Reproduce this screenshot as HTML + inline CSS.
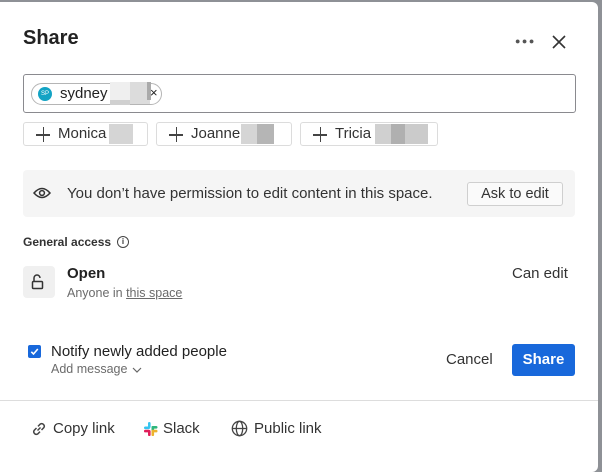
<!DOCTYPE html>
<html><head><style>
*{box-sizing:border-box;margin:0;padding:0}
body{width:602px;height:456px;overflow:hidden;background:#8e9196;font-family:"Liberation Sans",sans-serif;color:#1f1f1f;position:relative}
.dlg{position:absolute;left:-10px;top:2px;width:608px;height:470px;background:#fff;border-radius:6px}
.a{position:absolute}
.g{color:#6b6b6b}
.chip{position:absolute;top:122px;height:24px;border:1px solid #dcdcdc;border-radius:3px;font-size:15px;line-height:22px;padding-left:34px;color:#333}
.chip:before{content:"";position:absolute;left:12px;top:11px;width:14px;height:1.5px;background:#444}
.chip:after{content:"";position:absolute;left:18.5px;top:4px;width:1.5px;height:15px;background:#444}
.blur{position:absolute;top:1px;height:20px}
</style></head><body>
<div class="dlg"></div>
<div class="a" style="left:23px;top:27px;font-size:20px;font-weight:bold;color:#222">Share</div>
<div class="a" style="left:515px;top:36px;font-size:9px;letter-spacing:1.5px;color:#555;line-height:10px">●●●</div>
<svg class="a" style="left:552px;top:35px" width="14" height="14"><path d="M1 1L13 13M13 1L1 13" stroke="#333" stroke-width="1.6"/></svg>
<div class="a" style="left:23px;top:74px;width:553px;height:39px;border:1px solid #8a8a8f;border-radius:3px"></div>
<div class="a" style="left:31px;top:83px;width:131px;height:22px;border:1px solid #b5b5b5;border-radius:11px"></div>
<div class="a" style="left:38px;top:87px;width:14px;height:14px;border-radius:50%;background:#13a3c4;color:#fff;font-size:6px;line-height:14px;text-align:center">SP</div>
<div class="a" style="left:60px;top:85px;font-size:15px;color:#222">sydney</div>
<div class="a" style="left:110px;top:82px;width:20px;height:22px;background:#efefef"></div>
<div class="a" style="left:110px;top:100px;width:20px;height:5px;background:#d0d0d0"></div>
<div class="a" style="left:130px;top:82px;width:20px;height:22px;background:#dcdcdc"></div>
<div class="a" style="left:147px;top:82px;width:4px;height:18px;background:#aaa"></div>
<div class="a" style="left:150px;top:85px;font-size:13px;color:#222">×</div>
<div class="chip" style="left:23px;width:125px">Monica<div class="blur" style="left:85px;width:24px;background:#d5d5d5"></div></div>
<div class="chip" style="left:156px;width:136px">Joanne<div class="blur" style="left:84px;width:16px;background:#d5d5d5"></div><div class="blur" style="left:100px;width:17px;background:#b5b5b5"></div></div>
<div class="chip" style="left:300px;width:138px">Tricia<div class="blur" style="left:74px;width:16px;background:#d0d0d0"></div><div class="blur" style="left:90px;width:14px;background:#b0b0b0"></div><div class="blur" style="left:104px;width:23px;background:#cbcbcb"></div></div>
<div class="a" style="left:23px;top:170px;width:552px;height:47px;background:#f5f5f5;border-radius:4px"></div>
<svg class="a" style="left:33px;top:186px" width="18" height="14"><path d="M1 7Q9 -2 17 7Q9 16 1 7Z" fill="none" stroke="#333" stroke-width="1.5"/><circle cx="9" cy="7" r="2.4" fill="none" stroke="#333" stroke-width="1.5"/></svg>
<div class="a" style="left:67px;top:185px;font-size:15px;color:#333">You don’t have permission to edit content in this space.</div>
<div class="a" style="left:467px;top:182px;width:96px;height:24px;border:1px solid #cfcfcf;border-radius:3px;background:#fafafa;font-size:14.5px;line-height:22px;text-align:center;color:#333">Ask to edit</div>
<div class="a" style="left:23px;top:235px;font-size:12px;font-weight:bold;color:#333">General access</div>
<div class="a" style="left:117px;top:236px;width:12px;height:12px;border:1px solid #444;border-radius:50%;font-size:8px;line-height:10px;text-align:center;color:#333;font-weight:bold">i</div>
<div class="a" style="left:23px;top:266px;width:32px;height:32px;background:#f0f0f0;border-radius:4px"></div>
<svg class="a" style="left:31px;top:273px" width="14" height="18"><path d="M3 8V5a3 3 0 0 1 6 0" fill="none" stroke="#333" stroke-width="1.5"/><rect x="1.5" y="8.5" width="10" height="7" rx="1" fill="none" stroke="#333" stroke-width="1.5"/></svg>
<div class="a" style="left:67px;top:265px;font-size:15px;font-weight:bold;color:#222">Open</div>
<div class="a g" style="left:67px;top:286px;font-size:12.5px">Anyone in <span style="text-decoration:underline">this space</span></div>
<div class="a" style="left:512px;top:265px;font-size:15px;color:#333">Can edit</div>
<div class="a" style="left:28px;top:345px;width:13px;height:13px;background:#1868db;border-radius:2px"></div>
<svg class="a" style="left:28px;top:345px" width="13" height="13"><path d="M3.3 6.8L5.5 9L9.8 4" fill="none" stroke="#fff" stroke-width="1.6"/></svg>
<div class="a" style="left:51px;top:343px;font-size:15px;color:#222">Notify newly added people</div>
<div class="a g" style="left:51px;top:362px;font-size:12.5px">Add message</div>
<svg class="a" style="left:132px;top:367px" width="10" height="6"><path d="M1 1L5 5L9 1" fill="none" stroke="#666" stroke-width="1.2"/></svg>
<div class="a" style="left:446px;top:351px;font-size:15px;color:#333">Cancel</div>
<div class="a" style="left:512px;top:344px;width:63px;height:32px;background:#1868db;border-radius:3px;color:#fff;font-size:15px;font-weight:bold;line-height:32px;text-align:center">Share</div>
<div class="a" style="left:0;top:400px;width:598px;height:1px;background:#ddd"></div>
<svg class="a" style="left:30px;top:420px" width="18" height="18"><path d="M7.5 10.5L10.5 7.5M6.5 8L4.2 10.3a2.6 2.6 0 0 0 3.6 3.6L10 11.6M11.5 10L13.8 7.7a2.6 2.6 0 0 0-3.6-3.6L8 6.4" fill="none" stroke="#444" stroke-width="1.5"/></svg>
<div class="a" style="left:53px;top:420px;font-size:15px;color:#333">Copy link</div>
<svg class="a" style="left:143px;top:421px" width="16" height="16"><rect x="5" y="1" width="2.6" height="6" rx="1.3" fill="#36c5f0"/><rect x="1" y="5.5" width="6" height="2.6" rx="1.3" fill="#36c5f0"/><rect x="8.5" y="5" width="2.6" height="6" rx="1.3" fill="#2eb67d"/><rect x="8.5" y="5" width="6" height="2.6" rx="1.3" fill="#2eb67d"/><rect x="8.5" y="9" width="2.6" height="6" rx="1.3" fill="#ecb22e"/><rect x="8.5" y="8.8" width="6" height="2.6" rx="1.3" fill="#ecb22e"/><rect x="5" y="9" width="2.6" height="6" rx="1.3" fill="#e01e5a"/><rect x="1" y="8.8" width="6" height="2.6" rx="1.3" fill="#e01e5a"/></svg>
<div class="a" style="left:163px;top:420px;font-size:15px;color:#333">Slack</div>
<svg class="a" style="left:231px;top:420px" width="17" height="17"><circle cx="8.5" cy="8.5" r="7.2" fill="none" stroke="#444" stroke-width="1.3"/><ellipse cx="8.5" cy="8.5" rx="3.2" ry="7.2" fill="none" stroke="#444" stroke-width="1.3"/><path d="M1.3 8.5H15.7" stroke="#444" stroke-width="1.3"/></svg>
<div class="a" style="left:254px;top:420px;font-size:15px;color:#333">Public link</div>
</body></html>
